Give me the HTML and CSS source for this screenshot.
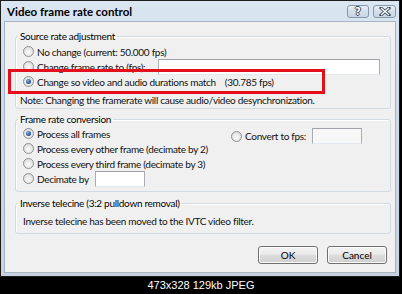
FILE: index.html
```html
<!DOCTYPE html>
<html lang="en">
<head>
  <meta charset="UTF-8" />
  <title>Video frame rate control</title>
  <link rel="stylesheet" href="styles.css">
</head>
<body>
  <div class="window">
    <div class="titlebar">
      <span class="title">Video frame rate control</span>
      <div class="caption-btns">
        <span class="cbtn help">?</span>
        <span class="cbtn close">
          <svg width="12" height="9" viewBox="0 0 12 9">
            <path d="M2 1 L10 8 M10 1 L2 8" stroke="#3b4a5e" stroke-width="3" stroke-linecap="square" />
            <path d="M2 1 L10 8 M10 1 L2 8" stroke="#fff" stroke-width="1.4" />
          </svg>
        </span>
      </div>
    </div>

    <div class="client">
      <fieldset class="group group-source">
        <legend>Source rate adjustment</legend>
        <div class="rows">
          <div class="row"><span class="radio"></span>No change (current: 50.000 fps)</div>
          <div class="row"><span class="radio"></span>Change frame rate to (fps):<span class="textbox wide"></span></div>
          <div class="row marked">
            <span class="radio checked"></span>Change so video and audio durations match<span class="fps">(30.785 fps)</span>
            <span class="highlight"></span>
          </div>
        </div>
        <div class="note">Note: Changing the framerate will cause audio/video desynchronization.</div>
      </fieldset>

      <fieldset class="group group-convert">
        <legend>Frame rate conversion</legend>
        <div class="cols">
          <div class="col-left">
            <div class="row"><span class="radio checked"></span>Process all frames</div>
            <div class="row"><span class="radio"></span>Process every other frame (decimate by 2)</div>
            <div class="row"><span class="radio"></span>Process every third frame (decimate by 3)</div>
            <div class="row"><span class="radio"></span>Decimate by<span class="textbox small decimate"></span></div>
          </div>
          <div class="col-right">
            <span class="radio"></span>Convert to fps:<span class="textbox small fpsbox"></span>
          </div>
        </div>
      </fieldset>

      <fieldset class="group group-ivtc">
        <legend>Inverse telecine (3:2 pulldown removal)</legend>
        <div class="info">Inverse telecine has been moved to the IVTC video filter.</div>
      </fieldset>

      <div class="actions">
        <button class="btn">OK</button>
        <button class="btn">Cancel</button>
      </div>
    </div>
  </div>
  <div class="caption">473x328 129kb JPEG</div>
</body>
</html>
```

FILE: styles.css
```css
body {
  margin: 0;
  width: 402px;
  height: 294px;
  overflow: hidden;
  background: #000;
  font-family: Lato, "Open Sans", sans-serif;
  font-size: 10px;
  letter-spacing: -0.3px;
  color: #111;
}
.window {
  width: 400px;
  height: 277px;
  box-sizing: border-box;
  border: 1px solid #1d1d1d;
  padding: 0 3px 3px;
  background: linear-gradient(#dbe6f3, #cfdbe9 30%, #c6d2df);
  display: flex;
  flex-direction: column;
}
.titlebar {
  height: 20px;
  display: flex;
  align-items: center;
  padding-left: 3px;
}
.title {
  font-weight: bold;
  font-size: 11.5px;
  letter-spacing: 0;
  color: #000;
}
.caption-btns {
  margin-left: auto;
  align-self: flex-start;
  margin-top: 4px;
  display: flex;
  gap: 4px;
}
.cbtn {
  width: 22px;
  height: 13px;
  box-sizing: border-box;
  border: 1px solid #8797ab;
  border-radius: 3px;
  background: linear-gradient(#e9eff7, #d3deeb 50%, #c8d5e4);
  display: flex;
  align-items: center;
  justify-content: center;
}
.help {
  font-family: "DejaVu Sans", sans-serif;
  font-weight: bold;
  font-size: 10px;
  letter-spacing: 0;
  color: #fff;
  text-shadow: -1px 0 #3b4a5e, 1px 0 #3b4a5e, 0 -1px #3b4a5e, 0 1px #3b4a5e;
  line-height: 11px;
}
.close {
  width: 23px;
}
.client {
  flex: 1;
  background: #f0f0f0;
  border: 1px solid #a6b4c4;
  padding: 8px 4px 0 10px;
}
.group {
  margin: 0;
  padding: 0;
  min-width: 0;
  border: 1px solid #d0dae2;
  border-radius: 3px;
  box-shadow: inset 1px 1px 0 #fff;
}
.group legend {
  margin-left: 2px;
  padding: 0 2px;
  line-height: 12px;
  color: #000;
}
.rows {
  padding-top: 2px;
}
.row {
  position: relative;
  display: flex;
  align-items: center;
  height: 15px;
  padding-left: 7px;
  white-space: nowrap;
}
.radio {
  width: 11px;
  height: 11px;
  box-sizing: border-box;
  margin-right: 3px;
  border: 1px solid #8e8f8f;
  border-radius: 50%;
  background: radial-gradient(circle at 50% 60%, #f4f4f4 20%, #d7d7d7 90%);
  display: inline-flex;
  align-items: center;
  justify-content: center;
  flex: none;
}
.radio.checked::after {
  content: "";
  width: 5px;
  height: 5px;
  border-radius: 50%;
  background: radial-gradient(circle at 40% 35%, #8ab0da, #1c4b85 70%);
}
.fps {
  margin-left: 9px;
}
.highlight {
  position: absolute;
  left: -8px;
  top: -5px;
  width: 317px;
  height: 25px;
  box-sizing: border-box;
  border: 3px solid #e3101c;
}
.textbox {
  display: inline-block;
  height: 16px;
  box-sizing: border-box;
  border: 1px solid #abadb3;
  border-top-color: #a0a3aa;
  border-bottom-color: #e3e9ef;
  background: #fff;
  flex: none;
}
.textbox.wide {
  width: 222px;
  margin-left: auto;
  margin-right: 10px;
}
.textbox.small {
  width: 50px;
}
.decimate {
  margin-left: 6px;
}
.note {
  padding-left: 4px;
  margin-top: 4px;
  line-height: 14px;
  padding-bottom: 1px;
}
.group-convert {
  margin-top: 4px;
}
.cols {
  display: flex;
  padding-top: 1px;
  padding-bottom: 5px;
}
.col-left {
  width: 215px;
}
.col-right {
  display: flex;
  align-items: center;
  height: 16px;
  margin-top: 2px;
}
.col-right .radio {
  margin-right: 3px;
}
.fpsbox {
  margin-left: 6px;
  background: #f7f7f7;
}
.group-ivtc {
  margin-top: 5px;
}
.info {
  padding: 5px 0 5px 7px;
  line-height: 14px;
}
.actions {
  display: flex;
  justify-content: flex-end;
  gap: 9px;
  margin-top: 12px;
  padding-right: 4px;
}
.btn {
  width: 60px;
  height: 18px;
  padding: 0;
  font-family: inherit;
  font-size: 10px;
  letter-spacing: 0;
  color: #000;
  border: 1px solid #707070;
  border-radius: 3px;
  background: linear-gradient(#f2f2f2, #ebebeb 45%, #dddddd 50%, #cfcfcf);
  box-shadow: inset 0 0 0 1px #fcfcfc;
}
.caption {
  height: 17px;
  line-height: 17px;
  text-align: center;
  color: #fff;
  font-family: "Liberation Sans", Arial, sans-serif;
  font-size: 11px;
  letter-spacing: 0;
}
```
